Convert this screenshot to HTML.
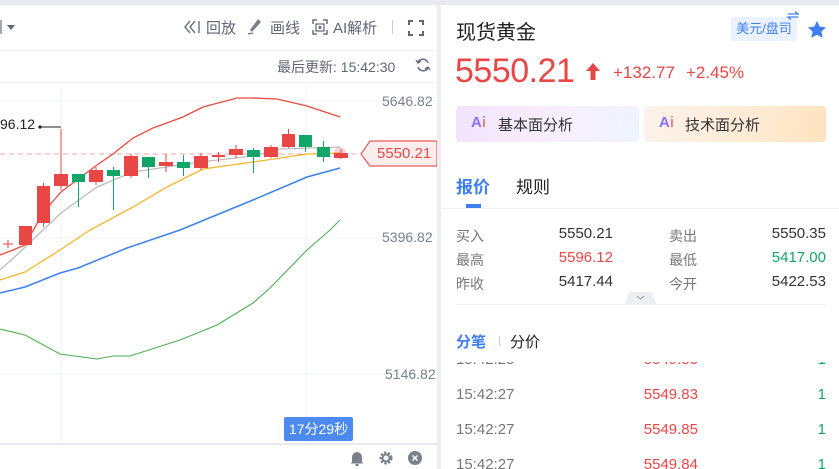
<!DOCTYPE html>
<html><head><meta charset="utf-8"><style>
*{margin:0;padding:0;box-sizing:border-box}
body{width:839px;height:469px;overflow:hidden;background:#fff;font-family:"Liberation Sans","Noto Sans CJK SC",sans-serif;position:relative;color:#333}
.a{position:absolute;white-space:nowrap}
.g{color:#5f6675}
.ai{font-size:15px;font-weight:bold;background:linear-gradient(90deg,#6b7df5,#9b6cf5 60%,#f0a050);-webkit-background-clip:text;background-clip:text;color:transparent}
</style></head><body>
<div class="a" style="left:0;top:0;width:839px;height:5px;background:#e8eaf0"></div>
<div class="a" style="left:437px;top:5px;width:4px;height:464px;background:#eceef3"></div>
<div class="a" style="left:0;top:20px;width:2px;height:14px;background:#a0a6b2"></div>
<div class="a" style="left:7px;top:25px;width:0;height:0;border-left:4px solid transparent;border-right:4px solid transparent;border-top:5px solid #5f6675"></div>
<svg class="a" style="left:182px;top:19px" width="20" height="16" viewBox="0 0 20 16"><path d="M8 2L3 8l5 6M13 2L8 8l5 6" fill="none" stroke="#6b7280" stroke-width="1.4"/><path d="M17 2v12" stroke="#6b7280" stroke-width="1.4"/></svg>
<div class="a g" style="left:206px;top:17px;font-size:15px">回放</div>
<svg class="a" style="left:246px;top:18px" width="18" height="18" viewBox="0 0 18 18"><path d="M12 1L4 12l2 2 9-10z" fill="#7a808c"/><path d="M2 16c2-1 3 0 5-1" stroke="#7a808c" stroke-width="1.5" fill="none"/></svg>
<div class="a g" style="left:270px;top:17px;font-size:15px">画线</div>
<svg class="a" style="left:312px;top:19px" width="16" height="16" viewBox="0 0 16 16"><path d="M1 5V1h4M11 1h4v4M15 11v4h-4M5 15H1v-4" fill="none" stroke="#6b7280" stroke-width="1.5"/><rect x="4" y="5" width="8" height="7" fill="none" stroke="#6b7280" stroke-width="1.3"/><circle cx="8" cy="8.5" r="1.6" fill="#6b7280"/></svg>
<div class="a g" style="left:333px;top:17px;font-size:15px">AI解析</div>
<div class="a" style="left:392px;top:20px;width:1px;height:14px;background:#c8ccd4"></div>
<svg class="a" style="left:408px;top:20px" width="16" height="16" viewBox="0 0 16 16"><path d="M1 5V1h4M11 1h4v4M15 11v4h-4M5 15H1v-4" fill="none" stroke="#5f6675" stroke-width="2"/></svg>
<div class="a" style="left:0;top:50px;width:437px;height:1px;background:#eef0f3"></div>
<div class="a g" style="left:277px;top:57px;font-size:14px">最后更新: 15:42:30</div>
<svg class="a" style="left:415px;top:57px" width="16" height="16" viewBox="0 0 16 16"><path d="M13 6A5.5 5.5 0 0 0 3 5M3 10a5.5 5.5 0 0 0 10 1" fill="none" stroke="#6b7280" stroke-width="1.6"/><path d="M1 3l2 3 3-2M15 13l-2-3-3 2" fill="none" stroke="#6b7280" stroke-width="1.4"/></svg>
<div class="a" style="left:0;top:82px;width:437px;height:1px;background:#eef0f3"></div>
<svg class="a" style="left:0;top:0" width="437" height="445" viewBox="0 0 437 445">
<path d="M0 101H437M0 238H437M0 374H437" stroke="#f2f3f6" stroke-width="1"/>
<path d="M61 83V443M306 83V443" stroke="#f2f3f6" stroke-width="1"/>
<path d="M0 154H360" stroke="#f2a5a5" stroke-width="1" stroke-dasharray="5,4"/>
<path d="M0 255L13 250L25 245L43 213L61 192L97 165L113 154L133 138L153 128L183 117L203 107L237 98L253 98L277 99L307 106L340 117" fill="none" stroke="#ea4b3c" stroke-width="1.3"/>
<path d="M0 270L20 252L43 230L61 213L97 187L133 172L200 162L253 156L280 149L340 147" fill="none" stroke="#bdbdbd" stroke-width="1.3"/>
<path d="M0 280L25 272L60 250L90 230L133 207L167 187L203 169L253 162L307 154L340 153" fill="none" stroke="#f8b62a" stroke-width="1.3"/>
<path d="M0 293L25 287L60 273L78 268L127 248L180 230L253 200L307 177L340 168" fill="none" stroke="#3d82f0" stroke-width="1.5"/>
<path d="M0 329L25 335L60 354L97 359L113 356L130 356L180 340L217 325L253 303L270 288L307 250L330 230L340 220" fill="none" stroke="#4caf50" stroke-width="1.1"/>
<g stroke="#e94646" fill="#e94646">
<path d="M3 244H13M8 240V248" stroke-width="1"/>
<rect x="19" y="226" width="13" height="19" stroke="none"/>
<path d="M43.5 183V227M61 129V190M96 167V185M131 154V178M166 154V172M201 153V170M218.5 152V162M236 145V158M271 145V158M288.5 129V148M341 149V159" stroke-width="1"/>
<rect x="37" y="186" width="13" height="37" stroke="none"/>
<rect x="54" y="174" width="14" height="12" stroke="none"/>
<rect x="89" y="170" width="14" height="12" stroke="none"/>
<rect x="124" y="156" width="14" height="20" stroke="none"/>
<rect x="159" y="162" width="14" height="4" stroke="none"/>
<rect x="194" y="156" width="14" height="12" stroke="none"/>
<rect x="212" y="155" width="13" height="2" stroke="none"/>
<rect x="229" y="149" width="14" height="6" stroke="none"/>
<rect x="264" y="147" width="14" height="10" stroke="none"/>
<rect x="282" y="134" width="13" height="13" stroke="none"/>
<rect x="334" y="153" width="14" height="5" stroke="none"/>
</g>
<circle cx="340" cy="153" r="6" fill="#e94646" opacity="0.25"/>
<g stroke="#12a56a" fill="#12a56a">
<path d="M78.5 174V207M113.5 167V210M148.5 157V178M183.5 155V176M253.5 148V173M305.5 135V152M323.5 141V162" stroke-width="1"/>
<rect x="72" y="174" width="13" height="8" stroke="none"/>
<rect x="107" y="170" width="13" height="6" stroke="none"/>
<rect x="142" y="157" width="13" height="10" stroke="none"/>
<rect x="177" y="162" width="13" height="6" stroke="none"/>
<rect x="247" y="150" width="13" height="7" stroke="none"/>
<rect x="299" y="135" width="13" height="12" stroke="none"/>
<rect x="317" y="147" width="13" height="10" stroke="none"/>
</g>
<path d="M40 127H61" stroke="#222" stroke-width="1"/><circle cx="40" cy="127" r="1.6" fill="#222"/>
<path d="M361 154L370 141H437V166H370Z" fill="#fdeeee" stroke="#ea5a5a" stroke-width="1.2"/>
</svg>
<div class="a" style="left:0;top:116px;font-size:14px;color:#222">96.12</div>
<div class="a" style="left:377px;top:145px;font-size:15px;color:#e94646">5550.21</div>
<div class="a" style="left:382px;top:93px;font-size:14px;color:#7a808c">5646.82</div>
<div class="a" style="left:382px;top:229px;font-size:14px;color:#7a808c">5396.82</div>
<div class="a" style="left:385px;top:366px;font-size:14px;color:#7a808c">5146.82</div>
<div class="a" style="left:284px;top:417px;width:69px;height:24px;background:#4d8af0;border-radius:2px;color:#fff;font-size:14px;line-height:24px;text-align:center">17分29秒</div>
<div class="a" style="left:0;top:443px;width:437px;height:2px;background:#e8eaf0"></div>
<svg class="a" style="left:349px;top:450px" width="76" height="16" viewBox="0 0 76 16"><path d="M3 12V7a5 5 0 0 1 10 0v5l1.5 1.5h-13Z" fill="#7a808c"/><rect x="6.5" y="14" width="3" height="2" fill="#7a808c"/>
<g transform="translate(37 8)"><circle r="5" fill="none" stroke="#7a808c" stroke-width="3" stroke-dasharray="2.2 1.4"/><circle r="3.5" fill="none" stroke="#7a808c" stroke-width="2"/></g>
<circle cx="66" cy="8" r="7" fill="#7a808c"/><path d="M63.5 5.5l5 5M68.5 5.5l-5 5" stroke="#fff" stroke-width="1.5"/></svg>
<div class="a" style="left:456px;top:16px;font-size:20px;color:#222">现货黄金</div>
<div class="a" style="left:731px;top:17px;width:66px;height:24px;background:#eaf2ff;border-radius:3px;color:#3f7ff0;font-size:13px;line-height:24px;text-align:center">美元/盘司</div>
<svg class="a" style="left:787px;top:11px" width="12" height="9" viewBox="0 0 12 9"><path d="M1 3H11L8 0.5M11 6H1L4 8.5" fill="none" stroke="#3f7ff0" stroke-width="1.3"/></svg>
<svg class="a" style="left:807px;top:20px" width="20" height="19" viewBox="0 0 24 23"><path d="M12 1l3.3 7 7.7.9-5.7 5.2 1.6 7.6L12 17.8l-6.9 3.9 1.6-7.6L1 8.9 8.7 8Z" fill="#3f7ff0"/></svg>
<div class="a" style="left:455px;top:52px;font-size:34px;color:#e94646;letter-spacing:-0.5px">5550.21</div>
<svg class="a" style="left:586px;top:63px" width="14" height="17" viewBox="0 0 14 17"><path d="M7 0L14 8H9.5V17H4.5V8H0Z" fill="#e94646"/></svg>
<div class="a" style="left:613px;top:63px;font-size:17px;color:#e94646">+132.77</div>
<div class="a" style="left:686px;top:63px;font-size:17px;color:#e94646">+2.45%</div>
<div class="a" style="left:456px;top:106px;width:183px;height:36px;border-radius:4px;background:linear-gradient(100deg,#f0e3fc,#f8f0fd 60%,#eef4ff)"></div>
<div class="a" style="left:644px;top:106px;width:182px;height:36px;border-radius:4px;background:linear-gradient(100deg,#fdf3ec,#fde9cf 70%,#fde3bd)"></div>
<div class="a ai" style="left:471px;top:114px">Ai</div>
<div class="a ai" style="left:659px;top:114px">Ai</div>
<div class="a" style="left:498px;top:114px;font-size:15px;color:#333">基本面分析</div>
<div class="a" style="left:685px;top:114px;font-size:15px;color:#333">技术面分析</div>
<div class="a" style="left:456px;top:173px;font-size:17px;font-weight:bold;color:#3f7ff0">报价</div>
<div class="a" style="left:516px;top:173px;font-size:17px;color:#222">规则</div>
<div class="a" style="left:466px;top:204px;width:15px;height:4px;background:#3f7ff0"></div>
<div class="a" style="left:441px;top:208px;width:398px;height:1px;background:#eceef2"></div>
<div class="a" style="left:456px;top:226px;font-size:14px;color:#777">买入</div>
<div class="a" style="left:530px;width:83px;text-align:right;top:225px;font-size:15px">5550.21</div>
<div class="a" style="left:669px;top:226px;font-size:14px;color:#777">卖出</div>
<div class="a" style="left:740px;width:86px;text-align:right;top:225px;font-size:15px">5550.35</div>
<div class="a" style="left:456px;top:250px;font-size:14px;color:#777">最高</div>
<div class="a" style="left:530px;width:83px;text-align:right;top:249px;font-size:15px;color:#e94646">5596.12</div>
<div class="a" style="left:669px;top:250px;font-size:14px;color:#777">最低</div>
<div class="a" style="left:740px;width:86px;text-align:right;top:249px;font-size:15px;color:#12a56a">5417.00</div>
<div class="a" style="left:456px;top:274px;font-size:14px;color:#777">昨收</div>
<div class="a" style="left:530px;width:83px;text-align:right;top:273px;font-size:15px">5417.44</div>
<div class="a" style="left:669px;top:274px;font-size:14px;color:#777">今开</div>
<div class="a" style="left:740px;width:86px;text-align:right;top:273px;font-size:15px">5422.53</div>
<svg class="a" style="left:625px;top:292px" width="31" height="12" viewBox="0 0 31 12"><path d="M4 0H27L31 12H0Z" fill="#eceef2"/><path d="M12 4l3.5 3 3.5-3" fill="none" stroke="#9aa0aa" stroke-width="1"/></svg>
<div class="a" style="left:456px;top:304px;width:370px;height:1px;background:#eceef2"></div>
<div class="a" style="left:456px;top:331px;font-size:15px;font-weight:bold;color:#3f7ff0">分笔</div>
<div class="a" style="left:499px;top:336px;width:1px;height:10px;background:#ccc"></div>
<div class="a" style="left:510px;top:331px;font-size:15px;color:#222">分价</div>
<div class="a" style="left:441px;top:362px;width:398px;height:107px;overflow:hidden">
 <div class="a" style="left:15px;top:-11px;font-size:15px;color:#777">15:42:28</div><div class="a" style="left:170px;width:87px;text-align:right;top:-11px;font-size:15px;color:#e94646">5549.88</div><div class="a" style="left:360px;width:25px;text-align:right;top:-11px;font-size:15px;color:#12a56a">1</div>
 <div class="a" style="left:15px;top:24px;font-size:15px;color:#777">15:42:27</div><div class="a" style="left:170px;width:87px;text-align:right;top:24px;font-size:15px;color:#e94646">5549.83</div><div class="a" style="left:360px;width:25px;text-align:right;top:24px;font-size:15px;color:#12a56a">1</div>
 <div class="a" style="left:15px;top:59px;font-size:15px;color:#777">15:42:27</div><div class="a" style="left:170px;width:87px;text-align:right;top:59px;font-size:15px;color:#e94646">5549.85</div><div class="a" style="left:360px;width:25px;text-align:right;top:59px;font-size:15px;color:#12a56a">1</div>
 <div class="a" style="left:15px;top:94px;font-size:15px;color:#777">15:42:27</div><div class="a" style="left:170px;width:87px;text-align:right;top:94px;font-size:15px;color:#e94646">5549.84</div><div class="a" style="left:360px;width:25px;text-align:right;top:94px;font-size:15px;color:#12a56a">1</div>
</div>
</body></html>
